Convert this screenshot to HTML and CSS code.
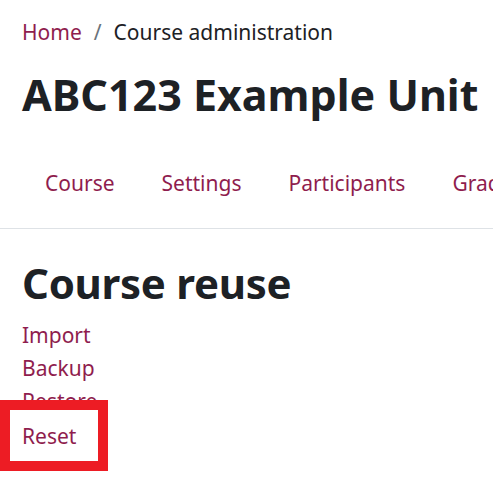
FILE: index.html
```html
<!DOCTYPE html>
<html lang="en">
<head>
<meta charset="utf-8">
<title>Course reuse</title>
<link rel="stylesheet" href="styles.css">
</head>
<body>
<div class="page">
  <nav class="breadcrumb">
    <a href="#" class="crumb-link">Home</a>
    <span class="sep">/</span>
    <span class="crumb-current">Course administration</span>
  </nav>
  <h1 class="page-title">ABC123 Example Unit</h1>
  <ul class="secnav">
    <li><a href="#">Course</a></li>
    <li><a href="#">Settings</a></li>
    <li><a href="#">Participants</a></li>
    <li><a href="#">Grades</a></li>
  </ul>
</div>
<div class="content">
  <h2 class="section-title">Course reuse</h2>
  <ul class="links">
    <li><a href="#">Import</a></li>
    <li><a href="#">Backup</a></li>
    <li><a href="#">Restore</a></li>
    <li class="highlighted"><a href="#">Reset</a><span class="highlight-box"></span></li>
  </ul>
</div>
</body>
</html>
```
FILE: styles.css
```css
html, body {
  margin: 0;
  padding: 0;
  background: #fff;
  overflow: hidden;
}
body {
  font-family: "Noto Sans", "Open Sans", sans-serif;
  color: #1d2125;
  width: 493px;
  height: 499px;
}
a {
  color: #8f1d4e;
  text-decoration: none;
}
.page {
  padding: 0 0 0 22px;
  border-bottom: 1px solid #dee2e6;
  white-space: nowrap;
  overflow: hidden;
}
.breadcrumb {
  padding-top: 17px;
  font-size: 21px;
  line-height: 30px;
  display: flex;
}
.sep {
  color: #6a737b;
  padding: 0 12px;
}
.page-title {
  margin: 23px 0 0;
  font-size: 43px;
  font-weight: 700;
  line-height: 50px;
}
.secnav {
  list-style: none;
  margin: 48px 0 0;
  padding: 0;
  display: flex;
  font-size: 21px;
  line-height: 30px;
  padding-bottom: 30px;
}
.secnav a {
  display: block;
  padding: 0 24px 0 23px;
}
.content {
  padding: 0 0 0 22px;
}
.section-title {
  margin: 29px 0 0;
  font-size: 42px;
  font-weight: 700;
  line-height: 50px;
  letter-spacing: -0.3px;
}
.links {
  list-style: none;
  margin: 11px 0 0;
  padding: 0;
  font-size: 21px;
  line-height: 33px;
}
.highlighted {
  position: relative;
  margin-top: 2px;
}
.highlight-box {
  position: absolute;
  left: -22px;
  top: -20px;
  width: 88px;
  height: 51px;
  border: 10px solid #ed1c24;
}
```
